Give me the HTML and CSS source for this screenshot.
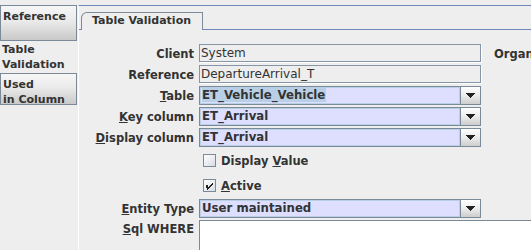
FILE: index.html
```html
<!DOCTYPE html>
<html lang="en">
<head>
    <meta charset="UTF-8">
    <title>Table Validation</title>
    <link rel="stylesheet" href="styles.css">
</head>
<body>
    <div class="window">
        <!-- Left navigation -->
        <div class="sidebar">
            <div class="side-btn side-btn-tall">Reference</div>
            <div class="side-label">Table<br>Validation</div>
            <div class="side-btn">Used<br>in Column</div>
        </div>

        <!-- Tabbed editor -->
        <div class="main">
            <div class="tabs">
                <div class="tab">Table Validation</div>
            </div>
            <div class="tab-body">
                <div class="form">
                    <label class="lbl">Client</label>
                    <div class="field field-ro">System</div>
                    <div class="lbl-extra"><span>Organization</span></div>

                    <label class="lbl">Reference</label>
                    <div class="field field-ro">DepartureArrival_T</div>
                    <span></span>

                    <label class="lbl"><u>T</u>able</label>
                    <div class="combo">
                        <div class="combo-value"><span class="selected">ET_Vehicle_Vehicle</span></div>
                        <div class="combo-btn"><svg width="9" height="6" viewBox="0 0 9 6"><path d="M0 0h9v1h-1v1h-1v1h-1v1h-1v1h-1v-1h-1v-1h-1v-1h-1v-1h-1z" fill="#222"/></svg></div>
                    </div>
                    <span></span>

                    <label class="lbl"><u>K</u>ey column</label>
                    <div class="combo">
                        <div class="combo-value">ET_Arrival</div>
                        <div class="combo-btn"><svg width="9" height="6" viewBox="0 0 9 6"><path d="M0 0h9v1h-1v1h-1v1h-1v1h-1v1h-1v-1h-1v-1h-1v-1h-1v-1h-1z" fill="#222"/></svg></div>
                    </div>
                    <span></span>

                    <label class="lbl"><u>D</u>isplay column</label>
                    <div class="combo">
                        <div class="combo-value">ET_Arrival</div>
                        <div class="combo-btn"><svg width="9" height="6" viewBox="0 0 9 6"><path d="M0 0h9v1h-1v1h-1v1h-1v1h-1v1h-1v-1h-1v-1h-1v-1h-1v-1h-1z" fill="#222"/></svg></div>
                    </div>
                    <span></span>

                    <span></span>
                    <div class="check-row">
                        <span class="check-box"></span>
                        <span class="check-text">Display <u>V</u>alue</span>
                    </div>
                    <span></span>

                    <span></span>
                    <div class="check-row">
                        <span class="check-box"><svg width="9" height="9" viewBox="0 0 9 9"><path d="M1 4h2v2h1v-1h1v-1h1v-1h1v-1h1v2h-1v1h-1v1h-1v1h-1v1h-1v1h-1v-2h-1z" fill="#222"/></svg></span>
                        <span class="check-text"><u>A</u>ctive</span>
                    </div>
                    <span></span>

                    <label class="lbl"><u>E</u>ntity Type</label>
                    <div class="combo">
                        <div class="combo-value">User maintained</div>
                        <div class="combo-btn"><svg width="9" height="6" viewBox="0 0 9 6"><path d="M0 0h9v1h-1v1h-1v1h-1v1h-1v1h-1v-1h-1v-1h-1v-1h-1v-1h-1z" fill="#222"/></svg></div>
                    </div>
                    <span></span>

                    <label class="lbl lbl-top"><u>S</u>ql WHERE</label>
                    <div class="textarea"></div>
                </div>
            </div>
        </div>
    </div>
</body>
</html>
```

FILE: styles.css
```css
body {
    margin: 0;
    padding: 0;
    background: #eeeeee;
    font-family: "DejaVu Sans", sans-serif;
    color: #333333;
    overflow: hidden;
}

.window {
    display: flex;
    padding-top: 5px;
    height: 245px;
}

.sidebar {
    width: 78px;
    flex-shrink: 0;
    display: flex;
    flex-direction: column;
}

.side-btn, .side-label {
    width: 77px;
    box-sizing: border-box;
    font-size: 11px;
    font-weight: bold;
    line-height: 15px;
    padding: 3px 2px 0;
}

.side-btn {
    border: 1px solid #7a8a99;
    background: linear-gradient(to bottom, #f6f6f6, #eaeaea 45%, #c9c9c9);
    height: 32px;
}

.side-btn-tall {
    height: 36px;
}

.side-label {
    height: 32px;
    padding-top: 1px;
}

.main {
    flex: 1;
    min-width: 0;
    border-top: 1px solid #6f88bb;
    border-left: 1px solid #ffffff;
    display: flex;
    flex-direction: column;
}

.tabs {
    display: flex;
    padding: 6px 0 0 2px;
    border-bottom: 1px solid #6f88bb;
}

.tab {
    height: 17px;
    margin-bottom: -1px;
    padding: 0 11px 0 10px;
    border: 1px solid #7a8a99;
    border-bottom: none;
    border-top-left-radius: 6px;
    background: #eeeeee;
    font-size: 11px;
    font-weight: bold;
    line-height: 16px;
}

.tab-body {
    flex: 1;
    padding-top: 14px;
}

.form {
    display: grid;
    grid-template-columns: 115px 282px 1fr;
    grid-template-rows: 19px 19px 19px 19px 19px 23px 23px 19px 40px;
    column-gap: 5px;
    row-gap: 2px;
    align-items: center;
}

.lbl {
    font-size: 11.5px;
    font-weight: bold;
    text-align: right;
    white-space: nowrap;
}

.lbl-extra {
    overflow: hidden;
    padding-left: 8px;
    font-size: 11.5px;
    font-weight: bold;
    white-space: nowrap;
}

.lbl-top {
    align-self: start;
    padding-top: 2px;
}

.field {
    height: 18px;
    box-sizing: border-box;
    border: 1px solid #8596a6;
    box-shadow: 1px 1px 0 #ffffff;
    padding: 0 1px;
    font-size: 12px;
    line-height: 16px;
    white-space: nowrap;
    align-self: start;
}

.field-ro {
    background: #eeeeee;
}

.combo {
    display: flex;
    height: 19px;
    box-sizing: border-box;
    border: 1px solid #7a8a99;
}

.combo-value {
    flex: 1;
    background: #dedeff;
    box-shadow: inset 0 0 0 1px #b8cfe5;
    padding: 0 2px;
    font-size: 11.75px;
    font-weight: bold;
    line-height: 17px;
    white-space: nowrap;
}

.selected {
    background: #b8cfe5;
    padding-right: 1px;
}

.combo-btn {
    width: 19px;
    border-left: 1px solid #7a8a99;
    background: linear-gradient(to bottom, #ffffff, #ececec 50%, #cdcdcd);
    display: flex;
    align-items: center;
    justify-content: center;
}

.check-row {
    display: flex;
    align-items: center;
    gap: 5px;
    padding-left: 4px;
}

.check-box {
    width: 13px;
    height: 13px;
    box-sizing: border-box;
    border: 1px solid #7a8a99;
    background: linear-gradient(to bottom right, #ffffff, #d7dde4);
    display: flex;
    align-items: center;
    justify-content: center;
}

.check-text {
    font-size: 11.5px;
    font-weight: bold;
}

.textarea {
    grid-column: 2 / 4;
    height: 40px;
    margin-right: -10px;
    background: #ffffff;
    border: 1px solid #7a8a99;
    align-self: start;
}
```
